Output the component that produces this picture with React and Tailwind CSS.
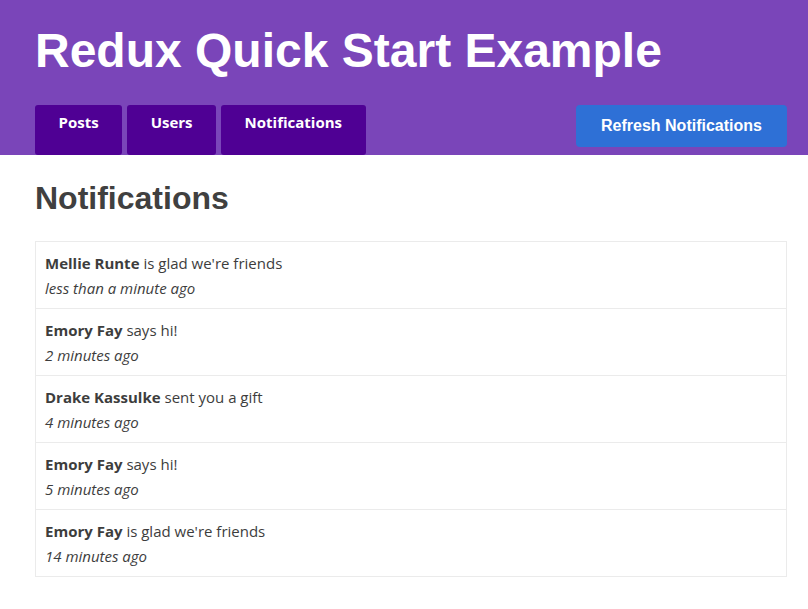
export default function App() {
  const notifications = [
    { name: "Mellie Runte", message: "is glad we're friends", time: "less than a minute ago" },
    { name: "Emory Fay", message: "says hi!", time: "2 minutes ago" },
    { name: "Drake Kassulke", message: "sent you a gift", time: "4 minutes ago" },
    { name: "Emory Fay", message: "says hi!", time: "5 minutes ago" },
    { name: "Emory Fay", message: "is glad we're friends", time: "14 minutes ago" },
  ];

  return (
    <div className="min-h-[609px] bg-white font-['Open_Sans',sans-serif] text-[#3d3d3d]">
      <nav className="bg-[#7a45b9] pl-[35px] pr-[21px]">
        <h1 className="pt-[22px] font-['Liberation_Sans',Arial,sans-serif] text-[48px] font-bold leading-[58px] text-white">
          Redux Quick Start Example
        </h1>
        <div className="mt-[25px] flex items-start justify-between">
          <div className="flex gap-[5px]">
            {["Posts", "Users", "Notifications"].map((label) => (
              <a
                key={label}
                className="flex h-[50px] items-start justify-center rounded-[3px] bg-[#4f0094] px-[23.5px] pt-[7px] text-[15px] font-bold leading-[20px] text-white"
              >
                {label}
              </a>
            ))}
          </div>
          <button className="h-[42px] w-[211px] rounded-[4px] bg-[#2e70d6] font-['Liberation_Sans',Arial,sans-serif] text-[16px] font-bold text-white">
            Refresh Notifications
          </button>
        </div>
      </nav>

      <main className="pl-[35px] pr-[21px]">
        <h2 className="pt-[23px] font-['Liberation_Sans',Arial,sans-serif] text-[32px] font-bold leading-[40px] text-[#404040]">
          Notifications
        </h2>
        <div className="mt-[23px] border-t border-[#ebebeb]">
          {notifications.map((n, i) => (
            <div
              key={i}
              className="h-[67px] border-x border-b border-[#ebebeb] px-[9px] pt-[9px] text-[15px] leading-[25px]"
            >
              <div>
                <b className="font-bold">{n.name}</b> {n.message}
              </div>
              <div className="italic">{n.time}</div>
            </div>
          ))}
        </div>
      </main>
    </div>
  );
}
